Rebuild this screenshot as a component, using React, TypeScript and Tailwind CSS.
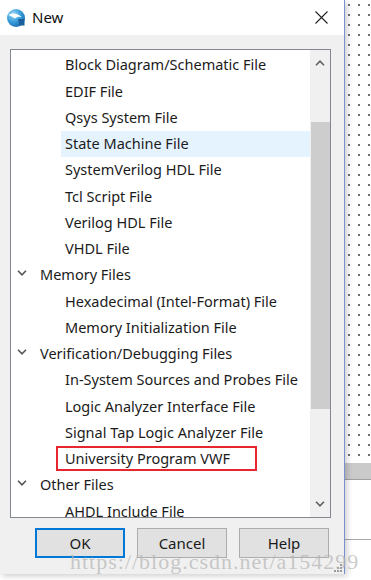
import React from "react"

type Row = { label: string; kind: "cat" | "item"; selected?: boolean; marked?: boolean }

const rows: Row[] = [
  { label: "Block Diagram/Schematic File", kind: "item" },
  { label: "EDIF File", kind: "item" },
  { label: "Qsys System File", kind: "item" },
  { label: "State Machine File", kind: "item", selected: true },
  { label: "SystemVerilog HDL File", kind: "item" },
  { label: "Tcl Script File", kind: "item" },
  { label: "Verilog HDL File", kind: "item" },
  { label: "VHDL File", kind: "item" },
  { label: "Memory Files", kind: "cat" },
  { label: "Hexadecimal (Intel-Format) File", kind: "item" },
  { label: "Memory Initialization File", kind: "item" },
  { label: "Verification/Debugging Files", kind: "cat" },
  { label: "In-System Sources and Probes File", kind: "item" },
  { label: "Logic Analyzer Interface File", kind: "item" },
  { label: "Signal Tap Logic Analyzer File", kind: "item" },
  { label: "University Program VWF", kind: "item", marked: true },
  { label: "Other Files", kind: "cat" },
  { label: "AHDL Include File", kind: "item" },
]

function Chevron({ up = false, className = "" }: { up?: boolean; className?: string }) {
  return (
    <svg width="10" height="6" viewBox="0 0 10 6" className={className}>
      <path
        d={up ? "M1 5.2 L5 1.2 L9 5.2" : "M1 0.8 L5 4.8 L9 0.8"}
        fill="none"
        stroke="currentColor"
        strokeWidth="1.6"
      />
    </svg>
  )
}

function AppIcon() {
  return (
    <svg width="20" height="20" viewBox="0 0 20 20">
      <defs>
        <radialGradient id="g1" cx="0.35" cy="0.3" r="0.8">
          <stop offset="0" stopColor="#9fd6f5" />
          <stop offset="0.5" stopColor="#3a9fdc" />
          <stop offset="1" stopColor="#1565a8" />
        </radialGradient>
      </defs>
      <circle cx="10" cy="10" r="9" fill="url(#g1)" />
      <path d="M2.5 7 C6 4.5 12 5 16 9.5 C14 8.5 11 8.5 9 10.5 C7 9 4.5 8 2.5 7 Z" fill="#ffffff" />
      <path d="M12 11 L18.5 11 L18.5 17.5 L13.5 17.5 Z" fill="#1a5e9c" />
    </svg>
  )
}

function Button({ label, primary = false }: { label: string; primary?: boolean }) {
  return (
    <div
      className={
        primary
          ? "w-[90px] h-[30px] flex items-center justify-center bg-[#e1e1e1] border-2 border-[#0078d7] text-[15px] text-[#1a1a1a]"
          : "w-[90px] h-[30px] flex items-center justify-center bg-[#e1e1e1] border border-[#adadad] text-[15px] text-[#1a1a1a]"
      }
    >
      {label}
    </div>
  )
}

export default function App() {
  return (
    <div
      className="relative w-[371px] h-[580px] flex bg-white overflow-hidden"
      style={{ fontFamily: '"Noto Sans", "Open Sans", sans-serif' }}
    >
      <div className="w-[345px] h-[574px] flex flex-col border-r border-[#7591d0] shadow-[2px_2px_6px_rgba(0,0,0,0.2)] z-10">
        <div className="h-[35px] bg-white flex items-center pl-[6px] pr-[16px]">
          <AppIcon />
          <span className="ml-[6px] text-[15px] text-[#111]">New</span>
          <svg width="13" height="13" viewBox="0 0 13 13" className="ml-auto">
            <path d="M0.5 0.5 L12.5 12.5 M12.5 0.5 L0.5 12.5" stroke="#222" strokeWidth="1.1" />
          </svg>
        </div>
        <div className="flex-1 bg-[#f0f0f0] px-[10px] pt-[14px] flex flex-col">
          <div className="h-[469px] w-[321px] border border-[#828790] bg-white flex">
            <div className="flex-1 overflow-hidden pt-[2px] text-[14.5px] text-[#1b1b1b]">
              {rows.map((r) =>
                r.kind === "cat" ? (
                  <div key={r.label} className="h-[26.25px] flex items-center pl-[6px]">
                    <Chevron className="text-[#555] mb-[4px]" />
                    <span className="ml-[13px]">{r.label}</span>
                  </div>
                ) : r.marked ? (
                  <div key={r.label} className="h-[26.25px] flex items-center">
                    <span className="ml-[45px] w-[201px] h-[25px] flex items-center pl-[7px] border-2 border-[#e8262f]">
                      {r.label}
                    </span>
                  </div>
                ) : (
                  <div
                    key={r.label}
                    className={
                      r.selected
                        ? "h-[26.25px] flex items-center ml-[50px] pl-[4px] bg-[#e5f3ff]"
                        : "h-[26.25px] flex items-center ml-[50px] pl-[4px]"
                    }
                  >
                    {r.label}
                  </div>
                )
              )}
            </div>
            <div className="w-[20px] bg-[#f0f0f0] flex flex-col items-center">
              <div className="h-[26px] flex items-center justify-center text-[#606060]">
                <Chevron up />
              </div>
              <div className="h-[46px]" />
              <div className="w-[19px] h-[287px] bg-[#cdcdcd]" />
              <div className="flex-1" />
              <div className="h-[26px] flex items-center justify-center text-[#606060]">
                <Chevron />
              </div>
            </div>
          </div>
          <div className="mt-[10px] flex gap-[12px] pl-[25px]">
            <Button label="OK" primary />
            <Button label="Cancel" />
            <Button label="Help" />
          </div>
          <div className="flex-1 flex justify-end items-end pb-[2px]">
            <div className="grid grid-cols-3 gap-[1px] mr-[-8px]">
              <span className="w-[2px] h-[2px]" />
              <span className="w-[2px] h-[2px]" />
              <span className="w-[2px] h-[2px] bg-[#999]" />
              <span className="w-[2px] h-[2px]" />
              <span className="w-[2px] h-[2px] bg-[#999]" />
              <span className="w-[2px] h-[2px] bg-[#999]" />
              <span className="w-[2px] h-[2px] bg-[#999]" />
              <span className="w-[2px] h-[2px] bg-[#999]" />
              <span className="w-[2px] h-[2px] bg-[#999]" />
            </div>
          </div>
        </div>
      </div>
      <div className="flex-1 flex flex-col">
        <div className="h-[463px] bg-white bg-[radial-gradient(circle,#6f6f6f_1px,transparent_1.5px)] bg-[size:10px_10px] bg-[position:-1px_0px]" />
        <div className="h-[17px] bg-[#cacaca] border-b border-[#a0a0a0]" />
        <div className="h-[60px] bg-white border-b border-[#a8a8a8]" />
        <div className="flex-1 bg-white" />
      </div>
      <div
        className="absolute left-[70px] top-[545px] z-20 text-[22px] tracking-[1px] text-[#b4b4b4]/70"
        style={{ fontFamily: '"Liberation Serif", serif' }}
      >
        https://blog.csdn.net/a154299
      </div>
    </div>
  )
}
